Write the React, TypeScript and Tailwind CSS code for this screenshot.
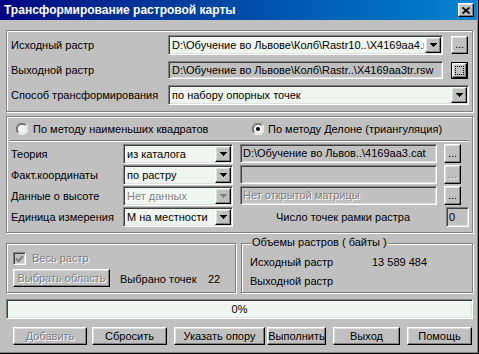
import React from "react"

// classic win9x bevels
const raised =
  "border border-t-white border-l-white border-r-black border-b-black shadow-[inset_-1px_-1px_0_#808080,inset_1px_1px_0_#dfdfdf]"
const sunken =
  "border border-t-[#808080] border-l-[#808080] border-r-white border-b-white shadow-[inset_1px_1px_0_#404040,inset_-1px_-1px_0_#dfdfdf]"
const etched = "border border-[#808080] shadow-[inset_1px_1px_0_#fff,1px_1px_0_#fff]"
const dim = "text-[#808080] [text-shadow:1px_1px_0_#fff]"

function Arrow({ disabled }: { disabled?: boolean }) {
  const c = disabled ? "#808080" : "#000"
  return (
    <div className={`m-[1px] w-[16px] h-[16px] shrink-0 flex items-center justify-center bg-[#c0c0c0] ${raised}`}>
      <svg width="7" height="4" viewBox="0 0 7 4" shapeRendering="crispEdges">
        <rect x="0" y="0" width="7" height="1" fill={c} />
        <rect x="1" y="1" width="5" height="1" fill={c} />
        <rect x="2" y="2" width="3" height="1" fill={c} />
        <rect x="3" y="3" width="1" height="1" fill={c} />
      </svg>
    </div>
  )
}

function Combo({ className, text, disabled }: { className: string; text: string; disabled?: boolean }) {
  return (
    <div className={`h-[20px] flex items-center bg-[#eff6ef] ${sunken} ${className}`}>
      <span className={`flex-1 overflow-hidden whitespace-nowrap pl-[3px] ${disabled ? dim : ""}`}>{text}</span>
      <Arrow disabled={disabled} />
    </div>
  )
}

function Dots({ className, disabled }: { className: string; disabled?: boolean }) {
  return (
    <div className={`shrink-0 flex items-end justify-center pb-[3px] bg-[#c0c0c0] ${raised} ${className}`}>
      <span className={`leading-none ${disabled ? dim : ""}`}>...</span>
    </div>
  )
}

function Radio({ checked }: { checked?: boolean }) {
  return (
    <svg width="12" height="12" viewBox="0 0 12 12" className="shrink-0">
      <circle cx="6" cy="6" r="5" fill="#eff6ef" />
      <path d="M10.2 1.8A5.9 5.9 0 0 0 1.8 10.2" stroke="#808080" fill="none" />
      <path d="M1.8 10.2A5.9 5.9 0 0 0 10.2 1.8" stroke="#fff" fill="none" />
      <path d="M9.5 2.5A4.9 4.9 0 0 0 2.5 9.5" stroke="#404040" fill="none" />
      <path d="M2.5 9.5A4.9 4.9 0 0 0 9.5 2.5" stroke="#dfdfdf" fill="none" />
      {checked && <circle cx="6" cy="6" r="2" fill="#000" />}
    </svg>
  )
}

function Button({ className, children, disabled }: { className: string; children: React.ReactNode; disabled?: boolean }) {
  return (
    <div className={`h-[18px] shrink-0 flex items-center justify-center whitespace-nowrap bg-[#c0c0c0] ${raised} ${className}`}>
      <span className={disabled ? dim : ""}>{children}</span>
    </div>
  )
}

export default function App() {
  return (
    <div className="w-[479px] h-[354px] bg-[#c0c0c0] border-r border-b border-black shadow-[inset_-1px_-1px_0_#808080] font-['Liberation_Sans',Arial,sans-serif] text-[11px] leading-none text-black flex flex-col select-none">
      <div className="w-[477px] h-[20px] shrink-0 flex items-center justify-between bg-linear-to-r from-[#000080] to-[#1084d0] pl-[4px] pr-[3px]">
        <span className="text-white font-bold text-[12px] whitespace-nowrap">Трансформирование растровой карты</span>
        <div className={`w-[16px] h-[14px] flex items-center justify-center bg-[#c0c0c0] ${raised}`}>
          <svg width="8" height="7" viewBox="0 0 8 7">
            <path d="M0.5 0.5L7.5 6.5M7.5 0.5L0.5 6.5" stroke="#000" strokeWidth="1.7" />
          </svg>
        </div>
      </div>

      <div className="pl-[6px] flex flex-col">
        {/* source / target */}
        <div className={`mt-[10px] w-[467px] h-[82px] pt-[4px] pl-[4px] flex flex-col ${etched}`}>
          <div className="h-[20px] flex items-center">
            <span className="w-[157px] shrink-0">Исходный растр</span>
            <Combo className="w-[275px]" text={"D:\\Обучение во Львове\\Колб\\Rastr10..\\X4169aa4.rsw"} />
            <Dots className="ml-[8px] w-[17px] h-[18px]" />
          </div>
          <div className="mt-[6px] h-[18px] flex items-center">
            <span className="w-[157px] shrink-0">Выходной растр</span>
            <div className={`w-[275px] h-[18px] flex items-center pl-[3px] overflow-hidden whitespace-nowrap bg-[#c0c0c0] ${sunken}`}>
              {"D:\\Обучение во Львове\\Колб\\Rastr..\\X4169aa3tr.rsw"}
            </div>
            <div className="ml-[8px] w-[17px] h-[17px] border border-black">
              <div className={`w-full h-full flex items-center justify-center bg-[#c0c0c0] ${raised}`}>
                <div className="w-[9px] h-[9px] border border-dotted border-black" />
              </div>
            </div>
          </div>
          <div className="mt-[6px] h-[20px] flex items-center">
            <span className="w-[157px] shrink-0">Способ трансформирования</span>
            <Combo className="w-[301px]" text="по набору опорных точек" />
          </div>
        </div>

        {/* method */}
        <div className={`mt-[4px] w-[467px] h-[117px] flex flex-col ${etched}`}>
          <div className="mt-[6px] ml-[9px] h-[12px] flex items-center">
            <div className="w-[236px] flex items-center gap-[5px] whitespace-nowrap">
              <Radio />
              <span>По методу наименьших квадратов</span>
            </div>
            <div className="flex items-center gap-[4px] whitespace-nowrap">
              <Radio checked />
              <span>По методу Делоне (триангуляция)</span>
            </div>
          </div>
          <div className="mt-[5px] ml-[3px] w-[459px] h-[2px] border-t border-t-[#808080] border-b border-b-white" />
          <div className="mt-[2px] pl-[4px] flex">
            <div className="flex flex-col gap-[1px]">
              <div className="h-[20px] flex items-center">
                <span className="w-[112px] shrink-0">Теория</span>
                <Combo className="w-[110px]" text="из каталога" />
              </div>
              <div className="h-[20px] flex items-center">
                <span className="w-[112px] shrink-0">Факт.координаты</span>
                <Combo className="w-[110px]" text="по растру" />
              </div>
              <div className="h-[20px] flex items-center">
                <span className="w-[112px] shrink-0">Данные о высоте</span>
                <Combo className="w-[110px]" text="Нет данных" disabled />
              </div>
              <div className="h-[20px] flex items-center">
                <span className="w-[112px] shrink-0">Единица измерения</span>
                <Combo className="w-[110px]" text="М на местности" />
              </div>
            </div>
            <div className="ml-[7px] flex flex-col gap-[1px]">
              <div className="h-[20px] flex items-start">
                <div className={`w-[197px] h-[19px] flex items-center pl-[2px] whitespace-nowrap overflow-hidden bg-[#c0c0c0] ${sunken}`}>
                  {"D:\\Обучение во Львов..\\4169aa3.cat"}
                </div>
                <Dots className="ml-[7px] w-[17px] h-[19px]" />
              </div>
              <div className="h-[20px] flex items-start">
                <div className={`w-[197px] h-[19px] bg-[#c0c0c0] ${sunken}`} />
                <Dots className="ml-[7px] w-[17px] h-[19px]" disabled />
              </div>
              <div className="h-[20px] flex items-start">
                <div className={`w-[197px] h-[19px] flex items-center pl-[2px] whitespace-nowrap bg-[#c0c0c0] ${sunken}`}>
                  <span className={dim}>Нет открытой матрицы</span>
                </div>
                <Dots className="ml-[7px] w-[17px] h-[19px]" />
              </div>
              <div className="h-[20px] flex items-center">
                <span className="ml-[36px] w-[170px] whitespace-nowrap">Число точек рамки растра</span>
                <div className={`w-[23px] h-[20px] flex items-center pl-[2px] bg-[#c0c0c0] ${sunken}`}>0</div>
              </div>
            </div>
          </div>
        </div>

        {/* area + sizes */}
        <div className="mt-[10px] flex gap-[5px]">
          <div className={`w-[230px] h-[50px] pt-[8px] pl-[6px] flex flex-col ${etched}`}>
            <div className="h-[13px] flex items-center gap-[6px]">
              <div className={`w-[13px] h-[13px] flex items-center justify-center bg-[#c0c0c0] ${sunken}`}>
                <svg width="9" height="9" viewBox="0 0 9 9">
                  <path d="M1 4.5L3.5 7L8 2" stroke="#808080" strokeWidth="2" fill="none" />
                </svg>
              </div>
              <span className={dim}>Весь растр</span>
            </div>
            <div className="mt-[4px] flex items-center">
              <Button className="w-[97px]" disabled>
                Выбрать область
              </Button>
              <span className="ml-[10px] mt-[3px] w-[88px] whitespace-nowrap">Выбрано точек</span>
              <span className="mt-[3px]">22</span>
            </div>
          </div>
          <div className={`relative w-[232px] h-[50px] pt-[11px] pl-[8px] flex flex-col ${etched}`}>
            <span className="absolute left-[9px] top-[-7px] px-[1px] bg-[#c0c0c0] whitespace-nowrap">
              Объемы растров ( байты )
            </span>
            <div className="h-[14px] flex items-center">
              <span className="w-[122px]">Исходный растр</span>
              <span>13 589 484</span>
            </div>
            <div className="mt-[5px] h-[14px] flex items-center">
              <span>Выходной растр</span>
            </div>
          </div>
        </div>

        <div className={`mt-[6px] w-[467px] h-[20px] flex items-center justify-center bg-[#eff6ef] ${sunken}`}>0%</div>

        <div className="mt-[8px] pl-[7px] flex">
          <Button className="w-[74px]" disabled>
            Добавить
          </Button>
          <Button className="ml-[5px] w-[75px]">Сбросить</Button>
          <Button className="ml-[7px] w-[91px]">Указать опору</Button>
          <Button className="ml-[2px] w-[59px]">Выполнить</Button>
          <Button className="ml-[7px] w-[67px]">Выход</Button>
          <Button className="ml-[7px] w-[65px]">Помощь</Button>
        </div>
      </div>
    </div>
  )
}
